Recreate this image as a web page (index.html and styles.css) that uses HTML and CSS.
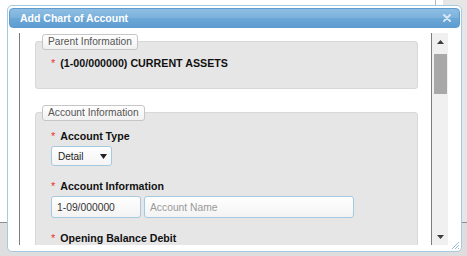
FILE: index.html
```html
<!DOCTYPE html>
<html lang="en">
<head>
    <meta charset="UTF-8">
    <meta name="viewport" content="width=device-width, initial-scale=1.0">
    <title>Add Chart of Account</title>
    <link rel="stylesheet" href="styles.css">
</head>
<body>
    <!-- PAGE BEHIND THE MODAL -->
    <div class="page">
        <div class="page-top">
            <div class="page-main"></div>
            <div class="page-gap"></div>
            <div class="page-side"></div>
        </div>
        <div class="page-bottom"></div>
    </div>

    <!-- DIALOG -->
    <div class="dialog">
        <div class="dialog-title">
            <span>Add Chart of Account</span>
            <svg class="dialog-close" width="8" height="8" viewBox="0 0 8 8">
                <path d="M1 1 L7 7 M7 1 L1 7" stroke="#d7e6f4" stroke-width="2" stroke-linecap="round"/>
            </svg>
        </div>

        <div class="dialog-frame">
            <div class="frame-content">
                <div class="group">
                    <div class="group-title">Parent Information</div>
                    <div class="parent-line"><span class="req">*</span>(1-00/000000) CURRENT ASSETS</div>
                </div>

                <div class="group">
                    <div class="group-title">Account Information</div>

                    <div class="field">
                        <label><span class="req">*</span>Account Type</label>
                        <div class="select">
                            <span>Detail</span>
                            <svg width="7" height="5" viewBox="0 0 7 5"><path d="M0 0 H7 L3.5 5 Z" fill="#222"/></svg>
                        </div>
                    </div>

                    <div class="field">
                        <label><span class="req">*</span>Account Information</label>
                        <div class="input-row">
                            <input class="input input-code" type="text" value="1-09/000000">
                            <input class="input input-name" type="text" placeholder="Account Name">
                        </div>
                    </div>

                    <div class="field">
                        <label><span class="req">*</span>Opening Balance Debit</label>
                        <div class="input-row">
                            <input class="input input-name" type="text" value="0.00">
                        </div>
                    </div>
                </div>
            </div>

            <!-- fake scrollbar of the frame -->
            <div class="scrollbar">
                <div class="scroll-btn">
                    <svg width="7" height="4" viewBox="0 0 7 4"><path d="M0 4 H7 L3.5 0 Z" fill="#3c3c3c"/></svg>
                </div>
                <div class="scroll-track"><div class="scroll-thumb"></div></div>
                <div class="scroll-btn">
                    <svg width="7" height="4" viewBox="0 0 7 4"><path d="M0 0 H7 L3.5 4 Z" fill="#3c3c3c"/></svg>
                </div>
            </div>
        </div>

        <svg class="resize-handle" width="9" height="9" viewBox="0 0 9 9">
            <path d="M8 1 L1 8 M8 4 L4 8 M8 7 L7 8" stroke="#9dbcd6" stroke-width="1"/>
        </svg>
    </div>
</body>
</html>
```

FILE: styles.css
```css
:root {
    --field-border: #a6c9e2;
    --group-bg: #e6e6e6;
    --group-border: #d8d8d8;
    --frame-line: #7d7d7d;
    --req-color: #e8322f;
}

* { box-sizing: border-box; margin: 0; padding: 0; }

body {
    font-family: 'Liberation Sans', Arial, sans-serif;
    font-size: 10px;
    color: #111;
    background: #fff;
    width: 467px;
    height: 256px;
    overflow: hidden;
    position: relative;
}

/* page behind the modal */
.page { display: flex; flex-direction: column; height: 100%; }
.page-top { display: flex; height: 222px; }
.page-main { width: 436px; border-right: 1px solid #b8b8b8; }
.page-gap { width: 7px; }
.page-side { flex: 1; background: #e6e6e6; }
.page-bottom { flex: 1; border-top: 1px solid #8e8e8e; background: #dedede; }

/* dialog */
.dialog {
    position: absolute;
    left: 7px;
    top: 5px;
    width: 455px;
    height: 247px;
    background: #fff;
    border: 1px solid #a6c9e2;
    border-radius: 5px;
    padding: 2px 1px;
    display: flex;
    flex-direction: column;
}

.dialog-title {
    height: 20px;
    flex-shrink: 0;
    display: flex;
    align-items: center;
    justify-content: space-between;
    padding: 0 8px 0 10px;
    border: 1px solid #5f9bcf;
    border-radius: 4px;
    background: linear-gradient(#8fbee3, #7ab1dc 50%, #6ca8d7 52%, #5e9dd1);
    color: #fff;
    font-weight: bold;
    font-size: 10.5px;
}

.dialog-close { display: block; }

.dialog-frame {
    flex: 1;
    min-height: 0;
    display: flex;
    margin: 5px 12px 4px 10px;
}

.frame-content {
    flex: 1;
    overflow: hidden;
    border-left: 1px solid var(--frame-line);
    padding: 0 13px 0 15px;
}

/* groups (fieldset look) */
.group {
    background: var(--group-bg);
    border: 1px solid var(--group-border);
    border-radius: 3px;
    padding: 0 15px 18px;
    margin-top: 8px;
}
.group + .group { margin-top: 23px; }

.group-title {
    width: max-content;
    height: 16px;
    margin: -8px 0 0 -9px;
    padding: 0 5px;
    line-height: 13px;
    font-size: 10.2px;
    color: #555;
    border: 1px solid #c6c6c6;
    border-radius: 3px;
    background: linear-gradient(#ffffff, #f1f1f1);
}

.req {
    color: var(--req-color);
    font-weight: normal;
    font-size: 11px;
    margin-right: 5px;
}

.parent-line {
    margin-top: 7px;
    line-height: 13px;
    font-weight: bold;
    font-size: 10.7px;
}

.field { margin-top: 9px; }
.field + .field { margin-top: 14px; }

.field label {
    display: block;
    line-height: 13px;
    font-weight: bold;
    font-size: 10.6px;
    margin-bottom: 3px;
}

.select {
    width: 61px;
    height: 20px;
    display: flex;
    align-items: center;
    justify-content: space-between;
    padding: 0 4px 0 6px;
    border: 1px solid var(--field-border);
    border-radius: 3px;
    background: linear-gradient(#ffffff, #f4f4f4);
    color: #222;
}

.input-row { display: flex; gap: 3px; margin-top: 1px; }

.input {
    height: 22px;
    padding: 0 5px;
    font-family: inherit;
    font-size: 10.3px;
    color: #333;
    border: 1px solid var(--field-border);
    border-radius: 3px;
    background: linear-gradient(#ffffff, #f3f3f3);
    outline: none;
}
.input::placeholder { color: #999; }
.input-code { width: 90px; }
.input-name { width: 210px; }

/* scrollbar */
.scrollbar {
    width: 17px;
    flex-shrink: 0;
    border-left: 1px solid var(--frame-line);
    background: #f0f0f0;
    display: flex;
    flex-direction: column;
}
.scroll-btn {
    height: 17px;
    flex-shrink: 0;
    display: flex;
    align-items: center;
    justify-content: center;
}
.scroll-btn svg { display: block; }
.scroll-track { flex: 1; padding: 4px 1px 0 2px; }
.scroll-thumb { width: 13px; height: 40px; background: #a8a8a8; }

.resize-handle {
    position: absolute;
    right: 1px;
    bottom: 1px;
}
```
